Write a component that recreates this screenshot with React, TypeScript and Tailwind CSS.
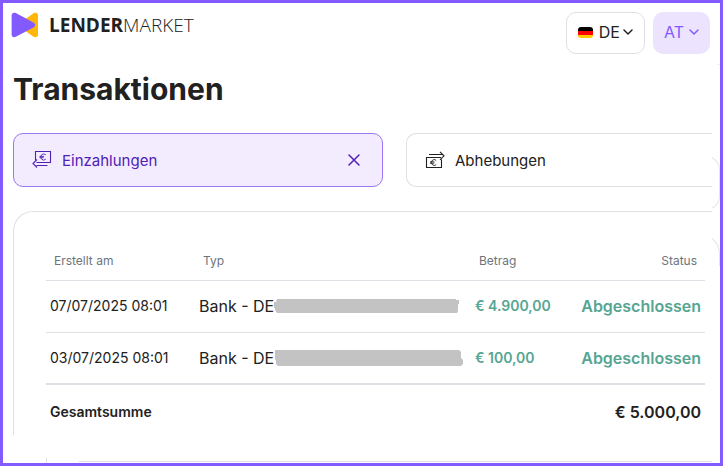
import { useState } from "react";

const transactions = [
  {
    date: "07/07/2025 08:01",
    type: "Bank - DE",
    amount: "€ 4.900,00",
    status: "Abgeschlossen",
    mask: "M3 1 L182 1 L182 2 L185 2 L185 6 L184 6 L184 13 L183 15 L3 15 L1 12 L1 10 L0 10 L0 4 L2 4 Z",
  },
  {
    date: "03/07/2025 08:01",
    type: "Bank - DE",
    amount: "€ 100,00",
    status: "Abgeschlossen",
    mask: "M1 0 L185 0 L187 2 L187 8 L189 10 L189 14 L187 16 L4 16 L2 14 L2 11 L1 9 Z",
  },
];

function LogoMark() {
  return (
    <svg width="28" height="26" viewBox="0 0 28 26" aria-hidden="true">
      <path d="M22.500 1.300C25 .2 27 1 27 3.500V22.500C27 25 25 25.800 22.500 24.700L13 18V8Z" fill="#ffb60a" />
      <path d="M.6 3.500C.6 1 2.600 0 4.800 1.100L22.500 10.400C24.800 11.700 24.800 14.100 22.500 15.400L4.800 24.700C2.600 25.800 .6 24.800 .6 22.500Z" fill="#835aff" />
    </svg>
  );
}

function Chevron() {
  return (
    <svg width="10" height="6" viewBox="0 0 10 6" fill="none" stroke="currentColor" strokeWidth="1.5" strokeLinecap="round" strokeLinejoin="round" aria-hidden="true">
      <path d="M1 1L5 5L9 1" />
    </svg>
  );
}

function GermanFlag() {
  return (
    <svg width="15" height="11" viewBox="0 0 15 11" aria-hidden="true">
      <clipPath id="flag">
        <rect width="15" height="11" rx="3" />
      </clipPath>
      <g clipPath="url(#flag)">
        <rect width="15" height="4" fill="#000" />
        <rect y="4" width="15" height="4" fill="#f00" />
        <rect y="8" width="15" height="3" fill="#ffc800" />
      </g>
    </svg>
  );
}

function DepositIcon() {
  return (
    <svg width="20" height="18" viewBox="0 0 20 18" fill="none" stroke="currentColor" aria-hidden="true">
      <path d="M3.500 9V.5H18.500V11.500H4.500M5 8.500L1 12.500L5 16.500M4.500 14.500H15.500" strokeWidth="1.100" />
      <path d="M13.800 3.900A3 3 0 1 0 13.800 8.100M7.500 5.400H12M7.500 6.700H11.700" strokeWidth="0.9" />
    </svg>
  );
}

function WithdrawIcon() {
  return (
    <svg width="20" height="18" viewBox="0 0 20 18" fill="none" stroke="currentColor" aria-hidden="true">
      <path d="M4 3.500H17.500M15 .8L19 4.800L15 8.800M16 6.500H1.500V16.500H16.500V8.500" strokeWidth="1.100" />
      <path d="M11.200 9.300A2.900 2.900 0 1 0 11.200 13.700M5 10.900H9.500M5 12.200H9.200" strokeWidth="0.9" />
    </svg>
  );
}

export default function App() {
  const [filter, setFilter] = useState("deposits");

  return (
    <div className="min-h-screen border-3 border-[#835aff] bg-white font-[Inter,sans-serif] text-[#212121]">
      <header className="flex items-start justify-between pt-[9px] pr-[10px] pl-2">
        <a href="#" className="flex items-center gap-[10px]" aria-label="Lendermarket">
          <LogoMark />
          <span className="font-['Open_Sans',sans-serif] text-[19px] leading-6">
            <span className="font-bold">LENDER</span>
            <span className="font-light">MARKET</span>
          </span>
        </a>
        <div className="flex gap-2">
          <button type="button" className="flex h-[42px] items-center rounded-[10px] border border-[#dee0e6] px-[11px] pb-0.5">
            <GermanFlag />
            <span className="ml-[6px] mr-[3px]">DE</span>
            <Chevron />
          </button>
          <button type="button" className="flex h-[42px] items-center gap-[5px] rounded-[10px] bg-[#ece4ff] px-[11px] pb-0.5 text-[#835aff]">
            AT
            <Chevron />
          </button>
        </div>
      </header>

      <div className="flex">
        <main className="min-w-0 flex-1 pl-[10px]">
          <h1 className="mt-[15px] text-[30px] leading-10 font-bold">Transaktionen</h1>

          <div className="mt-6 grid grid-cols-[370fr_306fr] gap-x-[23px] text-[15px]">
            <div className="flex h-[54px] items-center justify-between rounded-[10px] border border-[#9b77f5] bg-[#f3ecff] pr-[22px] pl-[18px] text-[#4f21b5]">
              <button type="button" onClick={() => setFilter("deposits")} aria-pressed={filter === "deposits"} className="flex items-center gap-[10px]">
                <DepositIcon />
                <span className="pt-0.5">Einzahlungen</span>
              </button>
              <button type="button" onClick={() => setFilter("")} aria-label="Filter entfernen">
                <svg width="12" height="12" viewBox="0 0 12 12" stroke="currentColor" strokeWidth="1.5" strokeLinecap="round">
                  <path d="M1 1L11 11M11 1L1 11" />
                </svg>
              </button>
            </div>
            <button
              type="button"
              onClick={() => setFilter("withdrawals")}
              aria-pressed={filter === "withdrawals"}
              className="flex h-[54px] items-center gap-[10px] rounded-l-[10px] border-y border-l border-[#dee0e6] px-[18px]"
            >
              <WithdrawIcon />
              <span className="pt-0.5">Abhebungen</span>
            </button>
          </div>

          <section className="mt-6 h-56 rounded-tl-[20px] border-t border-l border-[#dee0e6] pt-[29px] pr-[7px] pl-8">
            <table className="w-full table-fixed text-left">
              <thead>
                <tr className="h-[39px] border-b border-[#dee0e6] text-xs text-[#6c757d]">
                  <th className="w-[149px] pt-0.5 pl-2 font-normal">Erstellt am</th>
                  <th className="pt-0.5 pl-2 font-normal">Typ</th>
                  <th className="w-[105px] pt-0.5 pl-2 font-normal">Betrag</th>
                  <th className="w-[129px] pt-0.5 pr-2 text-right font-normal">Status</th>
                </tr>
              </thead>
              <tbody>
                {transactions.map((t) => (
                  <tr key={t.date} className="h-[52px] border-b border-[#dee0e6] last:border-b-2">
                    <td className="pl-1 text-sm">{t.date}</td>
                    <td className="pl-1">
                      <div className="flex items-center">
                        {t.type}
                        <svg width="190" height="16" viewBox="0 0 190 16" className="shrink-0" aria-hidden="true">
                          <path d={t.mask} fill="#c3c3c3" />
                        </svg>
                      </div>
                    </td>
                    <td className="pl-1 text-sm font-semibold text-[#56a592]">{t.amount}</td>
                    <td className="pr-1 text-right font-semibold text-[#56a592]">{t.status}</td>
                  </tr>
                ))}
              </tbody>
              <tfoot>
                <tr className="h-[54px]">
                  <td className="pl-1 text-sm font-semibold">Gesamtsumme</td>
                  <td colSpan={3} className="pr-1 text-right font-semibold">€ 5.000,00</td>
                </tr>
              </tfoot>
            </table>
          </section>

          <div className="mt-[23px] ml-[33px] h-[5px] border-l border-[#dee0e6] pt-[3px] pl-8">
            <div className="border-t border-[#dee0e6]" />
          </div>
        </main>

        {/* right edges of the cards behind */}
        <div className="w-2 overflow-hidden pt-[10px]" aria-hidden="true">
          <div className="ml-[5px] border-t border-[#f0f0f3]" />
          <div className="mt-[91px] -ml-2 h-[54px] rounded-r-[14px] border-y border-r border-[#e4e5ea]" />
          <div className="mt-6 -ml-4 h-8 rounded-tr-[20px] border-t border-r border-[#e4e5ea]" />
        </div>
      </div>
    </div>
  );
}
